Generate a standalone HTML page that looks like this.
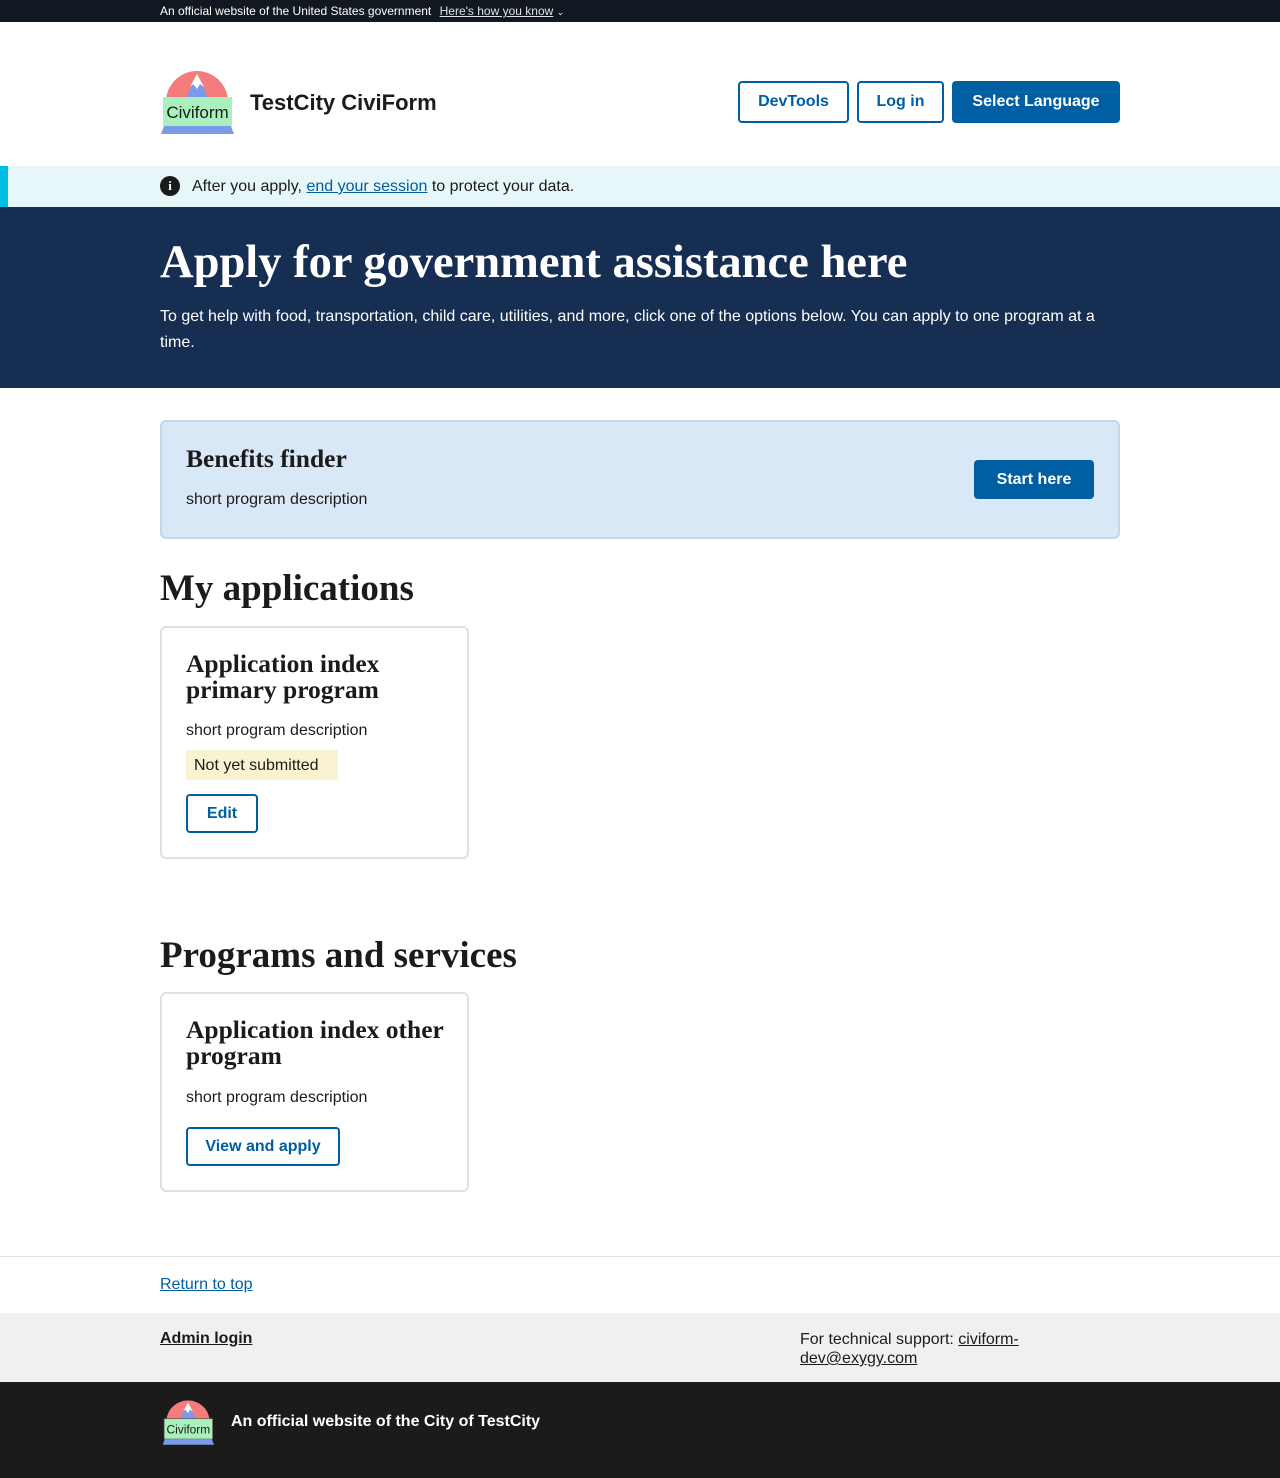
<!DOCTYPE html>
<html><head><meta charset="utf-8"><style>
*{box-sizing:border-box;margin:0;padding:0}
body{width:1280px;height:1478px;font-family:"Liberation Sans",sans-serif;color:#1b1b1b;background:#fff;position:relative;overflow:hidden}
.abs{position:absolute}
.serif{font-family:"Liberation Serif",serif;font-weight:bold}
a{color:#005ea2}
.btn-o{position:absolute;border:2px solid #005ea2;border-radius:4px;color:#005ea2;font-weight:bold;font-size:16px;display:flex;align-items:center;justify-content:center;background:#fff}
.card{position:absolute;border:2px solid #dfe1e2;border-radius:6px;background:#fff}
</style></head><body>
<div class="abs" style="left:0;top:0;width:1280px;height:22px;background:#111821;color:#fff;font-size:12px;line-height:23px;padding-left:160px">An official website of the United States government <span style="text-decoration:underline;color:#dfe1e2;margin-left:5px">Here's how you know</span> <span style="font-size:9px">&#8964;</span></div>

<svg class="abs" style="left:160px;top:68px" width="74" height="66" viewBox="0 0 74 66">
<circle cx="37" cy="34" r="31" fill="#f47c7c"/>
<polygon points="37,6 60,56 14,56" fill="#7b9bea"/>
<polygon points="37,6 44,19 40,16 37,21 33,16 30,19" fill="#fff"/>
<rect x="3" y="29" width="69" height="29" fill="#a9f0bc"/>
<polygon points="4,58 71,58 74,66 1,66" fill="#7b9bea"/>
<text x="37.5" y="50" text-anchor="middle" font-family="Liberation Sans,sans-serif" font-size="17" fill="#1b1b1b">Civiform</text>
</svg>
<div class="abs" style="left:250px;top:90px;font-size:22px;font-weight:bold">TestCity CiviForm</div>
<div class="btn-o" style="left:738px;top:81px;width:111px;height:42px">DevTools</div>
<div class="btn-o" style="left:857px;top:81px;width:87px;height:42px">Log in</div>
<div class="btn-o" style="left:952px;top:81px;width:168px;height:42px;background:#005ea2;color:#fff">Select Language</div>

<div class="abs" style="left:0;top:166px;width:1280px;height:41px;background:#e7f6f8;border-left:8px solid #00bde3"></div>
<div class="abs" style="left:160px;top:176px;width:20px;height:20px;border-radius:50%;background:#1b1b1b;color:#fff;font-size:13px;font-weight:bold;text-align:center;line-height:20px;font-family:'Liberation Serif',serif">i</div>
<div class="abs" style="left:192px;top:178px;font-size:16px">After you apply, <a style="text-decoration:underline">end your session</a> to protect your data.</div>

<div class="abs" style="left:0;top:207px;width:1280px;height:181px;background:#162e51;color:#fff">
<div class="serif abs" style="left:160px;top:29px;font-size:46.5px">Apply for government assistance here</div>
<div class="abs" style="left:160px;top:97px;width:970px;font-size:16px;line-height:26px">To get help with food, transportation, child care, utilities, and more, click one of the options below. You can apply to one program at a time.</div>
</div>

<div class="abs" style="left:160px;top:420px;width:960px;height:119px;background:#d9e8f6;border:2px solid #c5d6e6;border-radius:6px"></div>
<div class="serif abs" style="left:186px;top:444px;font-size:25.5px">Benefits finder</div>
<div class="abs" style="left:186px;top:491px;font-size:16px">short program description</div>
<div class="btn-o" style="left:974px;top:460px;width:120px;height:39px;background:#005ea2;color:#fff">Start here</div>

<div class="serif abs" style="left:160px;top:567px;font-size:37px">My applications</div>
<div class="card" style="left:160px;top:626px;width:309px;height:233px"></div>
<div class="serif abs" style="left:186px;top:651px;font-size:25.5px;line-height:26px;width:275px">Application index primary program</div>
<div class="abs" style="left:186px;top:722px;font-size:16px">short program description</div>
<div class="abs" style="left:186px;top:750px;width:152px;height:30px;background:#faf3d1;font-size:16px;line-height:31px;padding-left:8px">Not yet submitted</div>
<div class="btn-o" style="left:186px;top:794px;width:72px;height:39px">Edit</div>

<div class="serif abs" style="left:160px;top:934px;font-size:37px">Programs and services</div>
<div class="card" style="left:160px;top:992px;width:309px;height:200px"></div>
<div class="serif abs" style="left:186px;top:1017px;font-size:25.5px;line-height:26px;width:275px">Application index other program</div>
<div class="abs" style="left:186px;top:1089px;font-size:16px">short program description</div>
<div class="btn-o" style="left:186px;top:1127px;width:154px;height:39px">View and apply</div>

<div class="abs" style="left:0;top:1256px;width:1280px;height:1px;background:#dfe1e2"></div>
<div class="abs" style="left:160px;top:1276px;font-size:16px"><a style="text-decoration:underline">Return to top</a></div>
<div class="abs" style="left:0;top:1313px;width:1280px;height:69px;background:#f0f0f0"></div>
<div class="abs" style="left:160px;top:1330px;font-size:16px;font-weight:bold;text-decoration:underline">Admin login</div>
<div class="abs" style="left:800px;top:1330px;font-size:16px;line-height:19px;width:260px">For technical support: <span style="text-decoration:underline">civiform-dev@exygy.com</span></div>
<div class="abs" style="left:0;top:1382px;width:1280px;height:96px;background:#1b1b1b"></div>
<svg class="abs" style="left:162px;top:1398px" width="52" height="47" viewBox="0 0 74 66">
<circle cx="37" cy="34" r="31" fill="#f47c7c"/>
<polygon points="37,6 60,56 14,56" fill="#7b9bea"/>
<polygon points="37,6 44,19 40,16 37,21 33,16 30,19" fill="#fff"/>
<rect x="3" y="29" width="69" height="29" fill="#a9f0bc" stroke="#555" stroke-width="1"/>
<polygon points="4,58 71,58 74,66 1,66" fill="#7b9bea"/>
<text x="37.5" y="50" text-anchor="middle" font-family="Liberation Sans,sans-serif" font-size="17" fill="#1b1b1b">Civiform</text>
</svg>
<div class="abs" style="left:231px;top:1413px;font-size:16px;font-weight:bold;color:#fff">An official website of the City of TestCity</div>
</body></html>
